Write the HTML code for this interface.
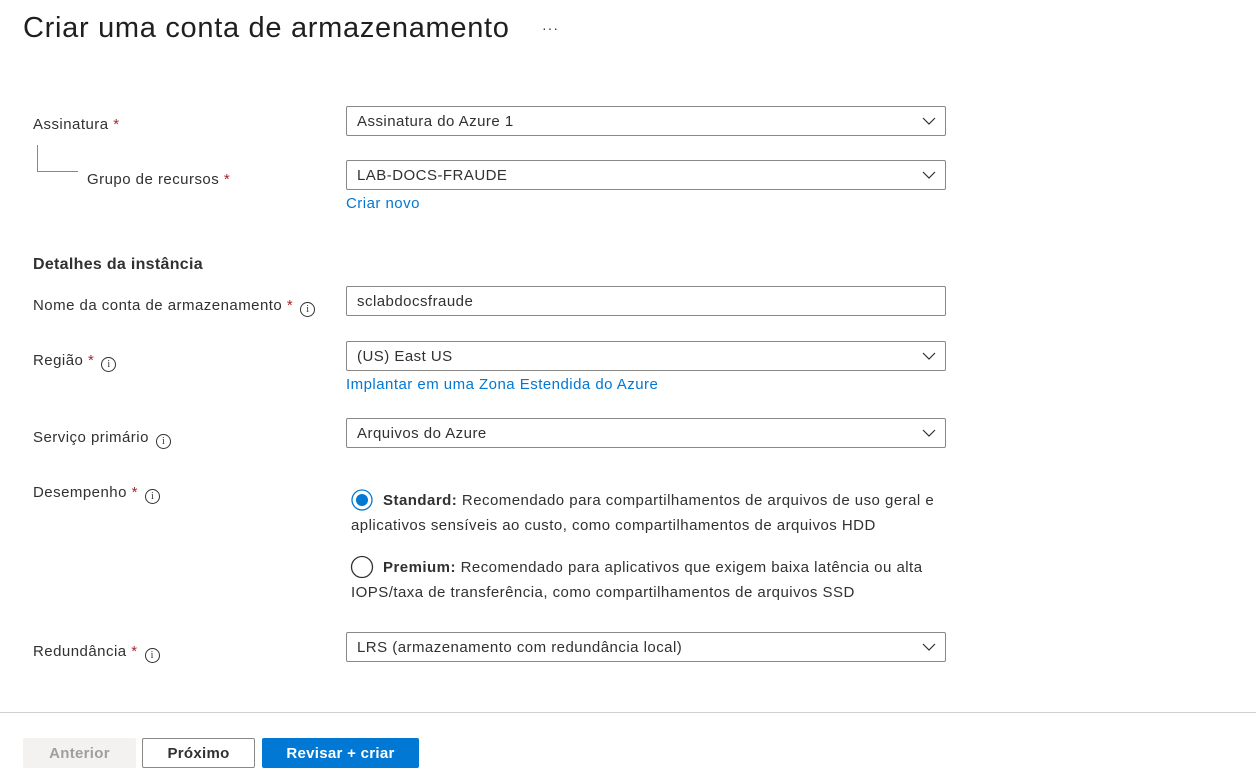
<!DOCTYPE html><html><head><meta charset="utf-8"><style>
body{margin:0;width:1256px;height:777px;background:#fff;font-family:"Liberation Sans",sans-serif;color:#323130;position:relative;overflow:hidden}
.a{position:absolute;white-space:nowrap}
.l{font-size:15px;letter-spacing:0.47px}
.r{color:#a4262c}
.in{position:absolute;left:346px;width:588px;height:28px;border:1px solid #8a8886;border-radius:2px;font-size:15px;letter-spacing:0.47px;line-height:30px;padding-left:10px;box-sizing:content-box}
.in svg{position:absolute;right:9px;top:10px}
.i{display:inline-block;width:13px;height:13px;border:1px solid #323130;border-radius:50%;font-size:10px;line-height:13px;text-align:center;vertical-align:-2px;margin-left:7px;letter-spacing:0;font-family:"Liberation Serif",serif}
.lk{color:#0078d4;font-size:15px;letter-spacing:0.47px}
.btn{position:absolute;top:738px;height:30px;border-radius:2px;font-size:15px;letter-spacing:0.3px;font-weight:bold;line-height:31px;text-align:center;box-sizing:border-box}
</style></head><body>
<div class="a" style="left:23px;top:12px;font-size:29px;letter-spacing:0.7px;color:#201f1e">Criar uma conta de armazenamento</div>
<div class="a" style="left:542px;top:20px;font-size:14px;letter-spacing:1px">···</div>

<div class="a l" style="left:33px;top:116px">Assinatura <span class="r">*</span></div>
<div class="a" style="left:37px;top:145px;width:40px;height:26px;border-left:1px solid #8a8886;border-bottom:1px solid #8a8886"></div>
<div class="a l" style="left:87px;top:171px">Grupo de recursos <span class="r">*</span></div>
<div class="in" style="top:106px">Assinatura do Azure 1<svg width="14" height="9"><path d="M1 1l6 6 6-6" stroke="#323130" fill="none" stroke-width="1.2"/></svg></div>
<div class="in" style="top:160px">LAB-DOCS-FRAUDE<svg width="14" height="9"><path d="M1 1l6 6 6-6" stroke="#323130" fill="none" stroke-width="1.2"/></svg></div>
<div class="a lk" style="left:346px;top:195px">Criar novo</div>

<div class="a" style="left:33px;top:256px;font-size:16px;letter-spacing:0.3px;font-weight:bold">Detalhes da instância</div>
<div class="a l" style="left:33px;top:297px">Nome da conta de armazenamento <span class="r">*</span><span class="i">i</span></div>
<div class="in" style="top:286px">sclabdocsfraude</div>

<div class="a l" style="left:33px;top:352px">Região <span class="r">*</span><span class="i">i</span></div>
<div class="in" style="top:341px">(US) East US<svg width="14" height="9"><path d="M1 1l6 6 6-6" stroke="#323130" fill="none" stroke-width="1.2"/></svg></div>
<div class="a lk" style="left:346px;top:376px">Implantar em uma Zona Estendida do Azure</div>

<div class="a l" style="left:33px;top:429px">Serviço primário<span class="i">i</span></div>
<div class="in" style="top:418px">Arquivos do Azure<svg width="14" height="9"><path d="M1 1l6 6 6-6" stroke="#323130" fill="none" stroke-width="1.2"/></svg></div>

<div class="a l" style="left:33px;top:484px">Desempenho <span class="r">*</span><span class="i">i</span></div>
<svg class="a" style="left:350px;top:488px" width="24" height="24"><circle cx="12" cy="12" r="10" fill="none" stroke="#0078d4" stroke-width="1.3"/><circle cx="12" cy="12" r="6" fill="#0078d4"/></svg>
<div class="a l" style="left:383px;top:492px"><b>Standard:</b> Recomendado para compartilhamentos de arquivos de uso geral e</div>
<div class="a l" style="left:351px;top:517px">aplicativos sensíveis ao custo, como compartilhamentos de arquivos HDD</div>
<svg class="a" style="left:350px;top:555px" width="24" height="24"><circle cx="12" cy="12" r="10.5" fill="none" stroke="#323130" stroke-width="1.3"/></svg>
<div class="a l" style="left:383px;top:559px"><b>Premium:</b> Recomendado para aplicativos que exigem baixa latência ou alta</div>
<div class="a l" style="left:351px;top:584px">IOPS/taxa de transferência, como compartilhamentos de arquivos SSD</div>

<div class="a l" style="left:33px;top:643px">Redundância <span class="r">*</span><span class="i">i</span></div>
<div class="in" style="top:632px">LRS (armazenamento com redundância local)<svg width="14" height="9"><path d="M1 1l6 6 6-6" stroke="#323130" fill="none" stroke-width="1.2"/></svg></div>

<div class="a" style="left:0;top:712px;width:1256px;height:1px;background:#d2d0ce"></div>
<div class="btn" style="left:23px;width:113px;background:#f3f2f1;color:#a19f9d">Anterior</div>
<div class="btn" style="left:142px;width:113px;border:1px solid #8a8886;color:#323130;line-height:29px">Próximo</div>
<div class="btn" style="left:262px;width:157px;background:#0078d4;color:#fff">Revisar + criar</div>
</body></html>
